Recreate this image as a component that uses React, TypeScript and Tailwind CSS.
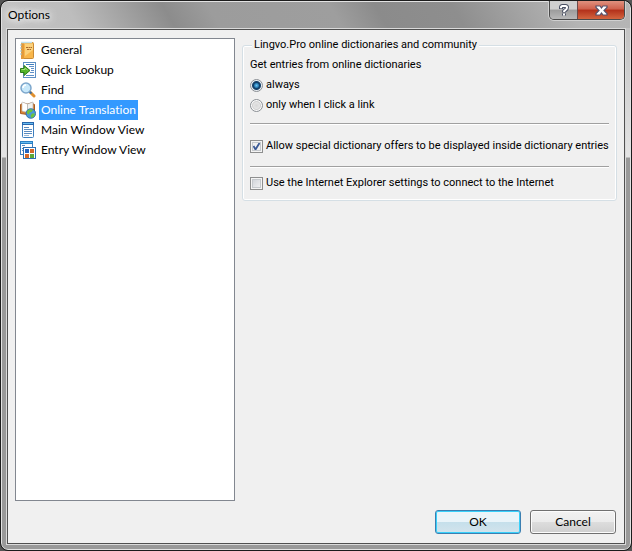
import { useState } from 'react'
import type { ReactNode } from 'react'

function BookIcon() {
  return (
    <svg width="16" height="18" viewBox="0 0 16 18">
      <rect x="1.5" y="1.5" width="12" height="16" rx="1" fill="#f8b64a" stroke="#c98a35" />
      <rect x="1" y="1" width="3" height="17" fill="#e39a3a" />
      <path d="M1 1.5h11" stroke="#bfe0ea" strokeWidth="1.4" />
      <path d="M5 3h8v6l-8 6z" fill="#fdd886" opacity=".8" />
      <path d="M0 4h2M0 7h2M0 10h2M0 13h2" stroke="#9fc3cf" />
      <path d="M6 6.5h6M7 8.5h4" stroke="#a96a2c" strokeDasharray="2 .5" />
    </svg>
  )
}

function LookupIcon() {
  return (
    <svg width="16" height="18" viewBox="0 0 16 18">
      <rect x="3.5" y="1.5" width="12" height="15" fill="#fff" stroke="#5d8fc4" />
      <path d="M6 3.5h8" stroke="#3f7fbf" />
      <path d="M9 5.500h5M11 7.500h3M11 9.500h3M10 11.500h4M6 14.500h8" stroke="#5f90c8" />
      <path d="M.5 7.5H4v-3L10 9.500 4 14.500v-3H.5z" fill="#55b52a" stroke="#2c7d18" />
      <path d="M1.500 8.500H5V7l2.500 2" fill="none" stroke="#a8e07c" />
    </svg>
  )
}

function FindIcon() {
  return (
    <svg width="16" height="18" viewBox="0 0 16 18">
      <path d="M10.500 11.500l3.500 3.500" stroke="#e0902f" strokeWidth="3" strokeLinecap="round" />
      <path d="M9.500 10.500l2 2" stroke="#3e6c9c" strokeWidth="2" />
      <circle cx="6" cy="7" r="5" fill="#c8e8fa" stroke="#7da7cc" strokeWidth="1.500" />
      <path d="M3 7a3 3 0 0 1 3-3" fill="none" stroke="#fff" strokeWidth="1.600" />
    </svg>
  )
}

function OnlineIcon() {
  return (
    <svg width="16" height="18" viewBox="0 0 16 18">
      <path d="M.5 3.500l3-1.500 4 1 4-1 3 1.500v9l-7 1-7-1z" fill="#d98436" stroke="#a85d22" />
      <path d="M2 1l5.500 2v8.500L2 10z" fill="#fff" stroke="#b9b9b9" strokeWidth=".6" />
      <path d="M13 1L7.500 3v8.500L13 10z" fill="#f1f1ee" stroke="#a9a9a9" strokeWidth=".6" />
      <circle cx="10.800" cy="12.500" r="4.800" fill="#4a98dc" stroke="#25649c" strokeWidth=".8" />
      <path d="M7 10.500c1-2.500 4.500-3 6-1.500l-1.500 2-2 .5-.5 2-2-1zM12 12.500h3l-1 3-2.500 1.500-1-2z" fill="#6ec43c" />
    </svg>
  )
}

function MainWindowIcon() {
  return (
    <svg width="16" height="18" viewBox="0 0 16 18">
      <rect x="2.5" y="1.5" width="11" height="15" rx="1" fill="#fff" stroke="#3e7fbf" />
      <path d="M2 2.500h12" stroke="#2866ad" strokeWidth="3" />
      <path d="M3 2.500h10" stroke="#67bdf0" />
      <path d="M4 6.500h5M4 8.500h8M4 10.500h8M4 12.500h8" stroke="#5b8cc0" />
      <path d="M4 14.500h5" stroke="#9ab9d8" />
    </svg>
  )
}

function EntryWindowIcon() {
  return (
    <svg width="16" height="18" viewBox="0 0 16 18">
      <rect x=".5" y=".5" width="12" height="13" fill="#fff" stroke="#3e7fbf" />
      <path d="M0 1.500h13" stroke="#2b80c4" strokeWidth="3" />
      <path d="M1 1.500h11" stroke="#67bdf0" />
      <path d="M2 4.500h3M2 7.500h1M2 9.500h1" stroke="#5b8cc0" />
      <rect x="3.5" y="6.5" width="12" height="11" fill="#fff" stroke="#2b70b4" />
      <rect x="5" y="8" width="4" height="4" fill="#2566c0" />
      <rect x="10" y="8" width="4" height="4" fill="#d5682a" />
      <rect x="5" y="13" width="4" height="4" fill="#d5682a" />
      <rect x="10" y="13" width="4" height="4" fill="#5da83a" />
    </svg>
  )
}

const SECTIONS = [
  { name: 'General', icon: <BookIcon /> },
  { name: 'Quick Lookup', icon: <LookupIcon /> },
  { name: 'Find', icon: <FindIcon /> },
  { name: 'Online Translation', icon: <OnlineIcon /> },
  { name: 'Main Window View', icon: <MainWindowIcon /> },
  { name: 'Entry Window View', icon: <EntryWindowIcon /> },
]

interface OptionProps {
  type: 'radio' | 'checkbox'
  checked: boolean
  onChange: () => void
  children: ReactNode
}

/** Radio or check box with its label */
function Option({ type, checked, onChange, children }: OptionProps) {
  return (
    <label className="flex h-5 items-center gap-[3px] whitespace-nowrap">
      {type === 'radio' ? (
        <input
          type="radio"
          name="online-entries"
          checked={checked}
          onChange={onChange}
          className="size-[13px] shrink-0 appearance-none rounded-full border border-[#8a8f94] bg-[radial-gradient(circle,#d8d8d8_0,#e4e4e4_3px,#d0d0d0_4px,#fafafa_5px)] checked:bg-[radial-gradient(circle,#6cc4f0_0,#2a80b8_2px,#123f68_3px,#17426a_4px,#e8edf2_5px)]"
        />
      ) : (
        <input
          type="checkbox"
          checked={checked}
          onChange={onChange}
          className="size-[13px] shrink-0 appearance-none border border-[#8e8f8f] bg-[linear-gradient(135deg,#cbcfd5,#f6f6f6)] shadow-[inset_0_0_0_1px_#f4f4f4,inset_0_0_0_2px_#c5c9cd] checked:bg-[url('data:image/svg+xml,%3Csvg%20xmlns=%22http://www.w3.org/2000/svg%22%20viewBox=%220%200%2011%2011%22%3E%3Cpath%20d=%22M2.5%205l2%203.500L8.500%202%22%20fill=%22none%22%20stroke=%22%233b5a96%22%20stroke-width=%221.800%22/%3E%3C/svg%3E')]"
        />
      )}
      {children}
    </label>
  )
}

function Separator() {
  return <hr className="h-[2px] border-0 border-t border-[#a0a0a0] bg-white" />
}

export default function App() {
  const [section, setSection] = useState('Online Translation')
  const [source, setSource] = useState<'always' | 'click'>('always')
  const [offers, setOffers] = useState(true)
  const [useIe, setUseIe] = useState(false)

  return (
    <div className="h-screen bg-[#555] font-[Lato,sans-serif] text-xs text-black [font-variant-ligatures:none]">
      <div className="h-full overflow-hidden rounded-lg border border-[#1c1c1c]">
        <div className="flex h-full flex-col rounded-[7px] border border-[#e2e2e2] bg-[linear-gradient(#bcbcbc_0,#e4e4e4_155px,#999_156px)] px-1 pb-1">
          {/* Title bar */}
          <header className="-mx-1 flex h-[26px] shrink-0 items-start justify-between rounded-t-[6px] bg-[linear-gradient(60deg,#c4c4c4_0,#bdbdbd_12%,#8c8c8c_27%,#9c9c9c_34%,#9e9e9e_53%,#8b8b8b_60%,#8e8e8e_72%,#b4b4b4_90%,#b5b5b5_100%)] pr-[5px] pl-1.5">
            <h1 className="leading-[26px] [text-shadow:0_0_6px_#fff,0_0_10px_#fff,0_0_14px_#fff]">Options</h1>
            <div className="-mt-px flex h-[19px] overflow-hidden rounded-b-[5px] border border-t-0 border-[#4a4a4a] shadow-[0_0_0_1px_#d0d0d0]">
              <button
                type="button"
                aria-label="Help"
                className="flex w-7 items-center justify-center border-r border-[#6a4a4a] bg-[linear-gradient(#d0d0d0_45%,#9c9c9c_50%,#b8b8b8)]"
              >
                <svg width="10" height="13" viewBox="0 0 10 13">
                  <path d="M2 5V3.500Q2 2 3.500 2h3Q8 2 8 3.500T6.500 6Q5 6.500 5 8.500M5 9.500v2" fill="none" stroke="#4b5164" strokeWidth="4" />
                  <path d="M2 4.200v-.7Q2 2 3.500 2h3Q8 2 8 3.500T6.500 6Q5 6.500 5 8M5 9.500v2" fill="none" stroke="#fff" strokeWidth="2" />
                </svg>
              </button>
              <button
                type="button"
                aria-label="Close"
                className="flex w-[46px] items-center justify-center bg-[linear-gradient(#e0917f_0,#cf604c_45%,#b3301a_50%,#d3653f)]"
              >
                <svg width="13" height="11" viewBox="0 0 13 11">
                  <path
                    d="M1 1h4l1.500 2L8 1h4v1.500L9 5.500l3 3V10H8L6.500 8 5 10H1V8.500l3-3-3-3z"
                    fill="#fff"
                    stroke="#54506a"
                    strokeWidth="1.200"
                  />
                </svg>
              </button>
            </div>
          </header>

          <div className="min-h-0 flex-1 border border-[#dadada]">
            <main className="flex h-full flex-col gap-[9px] border border-[#505050] bg-[#f0f0f0] px-[7px] pt-2 pb-[9px]">
              <div className="flex min-h-0 flex-1 gap-[7px]">
                <ul className="w-[220px] shrink-0 border border-[#828790] bg-white px-1 pt-px">
                  {SECTIONS.map(({ name, icon }) => (
                    <li key={name}>
                      <button
                        type="button"
                        onClick={() => setSection(name)}
                        className="flex h-5 items-center gap-[3px] leading-5"
                      >
                        {icon}
                        <span className={name === section ? 'bg-[#3399ff] px-0.5 text-white' : 'px-0.5'}>{name}</span>
                      </button>
                    </li>
                  ))}
                </ul>

                <fieldset className="min-w-0 flex-1 self-start rounded-[3px] border border-[#d5dfe5] px-[7px] pb-[7px] font-[Roboto,sans-serif] text-[11px] shadow-[inset_0_0_0_1px_#fff]">
                  <legend className="ml-0.5 bg-[#f0f0f0] px-0.5 leading-[14px]">
                    Lingvo.Pro online dictionaries and community
                  </legend>
                  <p className="mt-[3px] leading-5">Get entries from online dictionaries</p>
                  <Option type="radio" checked={source === 'always'} onChange={() => setSource('always')}>
                    always
                  </Option>
                  <Option type="radio" checked={source === 'click'} onChange={() => setSource('click')}>
                    only when I click a link
                  </Option>
                  <div className="mt-2 mb-[11px]">
                    <Separator />
                  </div>
                  <Option type="checkbox" checked={offers} onChange={() => setOffers(!offers)}>
                    Allow special dictionary offers to be displayed inside dictionary entries
                  </Option>
                  <div className="mt-2.5 mb-[5px]">
                    <Separator />
                  </div>
                  <Option type="checkbox" checked={useIe} onChange={() => setUseIe(!useIe)}>
                    Use the Internet Explorer settings to connect to the Internet
                  </Option>
                </fieldset>
              </div>

              <footer className="flex shrink-0 justify-end gap-[9px] pr-px">
                <button
                  type="button"
                  className="h-6 w-[86px] rounded-[3px] border border-[#3c7fb1] bg-[linear-gradient(#eaf4f9_50%,#c5dfeb_50%,#d3e4ec)] shadow-[inset_0_0_0_1px_#38d0fa]"
                >
                  OK
                </button>
                <button
                  type="button"
                  className="h-6 w-[86px] rounded-[3px] border border-[#707070] bg-[linear-gradient(#f2f2f2_0,#ebebeb_50%,#dddddd_50%,#cfcfcf)] shadow-[inset_0_0_0_1px_#fcfcfc]"
                >
                  Cancel
                </button>
              </footer>
            </main>
          </div>
        </div>
      </div>
    </div>
  )
}
